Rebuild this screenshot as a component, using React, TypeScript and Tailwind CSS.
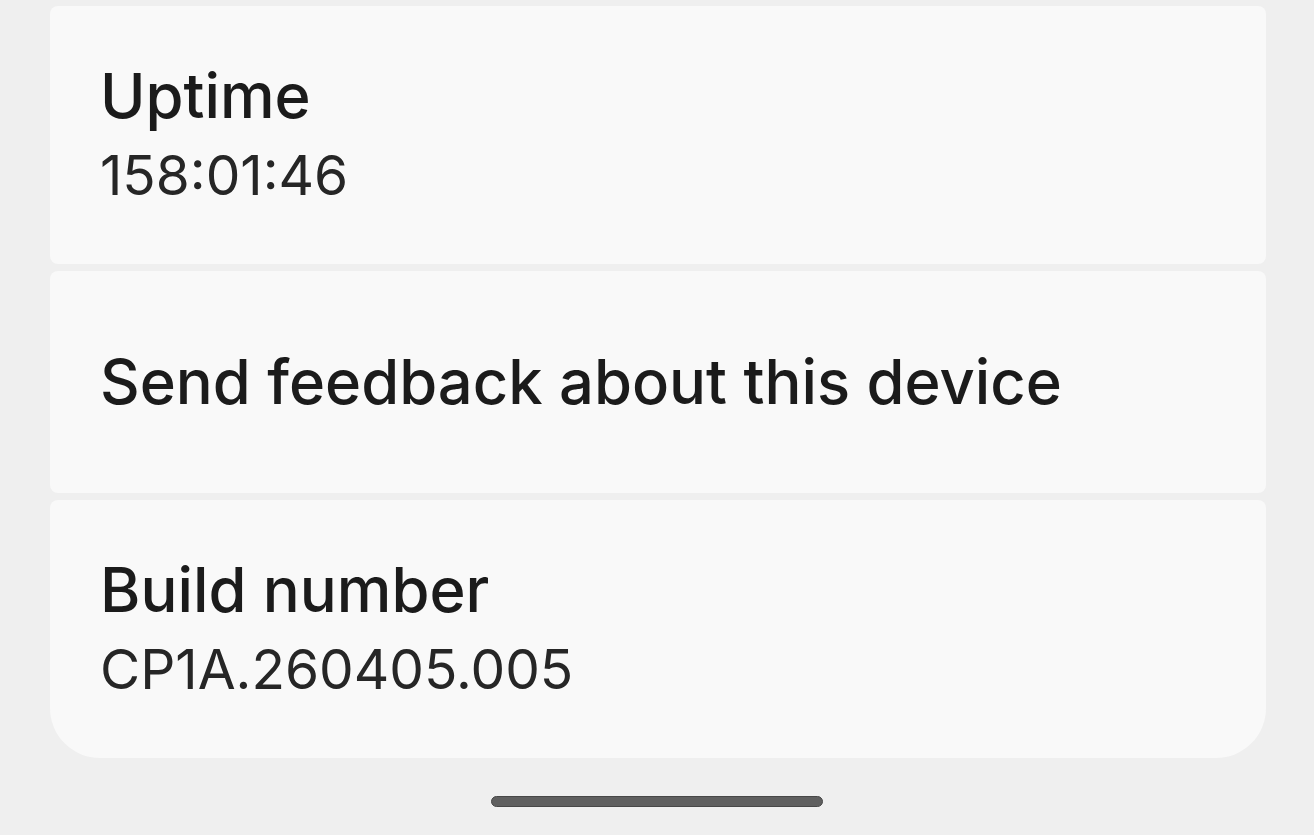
import React from 'react';

type Row = {
  title: string;
  summary?: string;
  shape: string;
  height: string;
};

const rows: Row[] = [
  { title: 'Uptime', summary: '158:01:46', shape: 'rounded-[8px]', height: 'h-[258px]' },
  { title: 'Send feedback about this device', shape: 'rounded-[8px]', height: 'h-[222px]' },
  {
    title: 'Build number',
    summary: 'CP1A.260405.005',
    shape: 'rounded-t-[8px] rounded-b-[50px]',
    height: 'h-[258px]',
  },
];

function PreferenceRow({ row }: { row: Row }) {
  return (
    <div className={`flex flex-col justify-center bg-[#f9f9f9] pl-[50px] pr-6 ${row.shape} ${row.height}`}>
      <div className="text-[61.5px] leading-[80px] font-medium text-[#1b1b1b]">{row.title}</div>
      {row.summary && (
        <div className="text-[55px] leading-[78px] text-[#262626]">{row.summary}</div>
      )}
    </div>
  );
}

export default function App() {
  return (
    <div
      className="w-[1314px] h-[835px] overflow-hidden bg-[#efefef] flex flex-col"
      style={{ fontFamily: 'Inter, "Noto Sans", sans-serif' }}
    >
      <div className="flex flex-col gap-[7px] pt-[6px] pl-[50px] pr-[48px]">
        {rows.map((row) => (
          <PreferenceRow key={row.title} row={row} />
        ))}
      </div>

      {/* gesture navigation handle */}
      <div className="flex justify-center pt-[38px]">
        <div className="w-[332px] h-[11px] rounded-full bg-[#5f5f5f] border border-[#474747]" />
      </div>
    </div>
  );
}
